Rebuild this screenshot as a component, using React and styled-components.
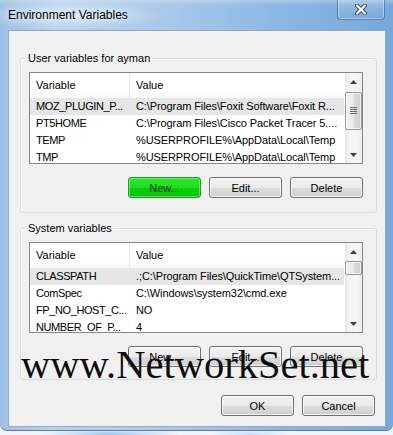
import React from "react";
import styled, { createGlobalStyle } from "styled-components";

const GlobalStyle = createGlobalStyle`
  html, body {
    margin: 0;
    padding: 0;
  }
  body {
    width: 393px;
    height: 435px;
    overflow: hidden;
    background: #eef3f9;
    font-family: "Liberation Sans", Arial, sans-serif;
  }
`;

const Screen = styled.div`
  position: relative;
  width: 393px;
  height: 435px;
  overflow: hidden;
  background:
    radial-gradient(ellipse 70px 5px at 110px 434px, rgba(110, 165, 225, 0.6), transparent),
    radial-gradient(ellipse 40px 4px at 250px 434px, rgba(140, 185, 235, 0.4), transparent),
    #f1f5fa;
`;

const Frame = styled.div`
  height: 431px;
  box-sizing: border-box;
  padding: 0 7px 0 8px;
  border-radius: 0 0 7px 7px;
  border-bottom: 1px solid #5d7ea6;
  display: flex;
  flex-direction: column;
  background:
    radial-gradient(ellipse 95px 15px at 70px 15px, rgba(225, 237, 249, 0.85), transparent),
    linear-gradient(to bottom, rgba(255, 255, 255, 0.25), transparent 6px),
    linear-gradient(to right, #9ec1e6 0%, #b7d1ed 14%, #a8c7e9 45%, #8bb6e3 72%, #76a7dc 100%);
`;

const TitleBar = styled.div`
  height: 30px;
  flex: none;
  display: flex;
  justify-content: space-between;
  align-items: center;
`;

const Title = styled.span`
  font-size: 12px;
  color: #000;
  text-shadow: 0 0 6px rgba(255, 255, 255, 0.9);
`;

const CloseButton = styled.div`
  align-self: flex-start;
  margin: -1px 1px 0 0;
  width: 48px;
  height: 21px;
  box-sizing: border-box;
  border: 1px solid rgba(50, 80, 120, 0.55);
  border-top: none;
  border-radius: 0 0 4px 4px;
  box-shadow: inset 0 0 0 1px rgba(255, 255, 255, 0.35);
  background: linear-gradient(to bottom, rgba(255, 255, 255, 0.25), rgba(120, 160, 210, 0.15));
  display: flex;
  align-items: center;
  justify-content: center;
`;

const Client = styled.div`
  height: 397px;
  flex: none;
  box-sizing: border-box;
  border: 1px solid #98aabe;
  background: #f0f0f0;
  padding: 20px 8px 10px 11px;
  display: flex;
  flex-direction: column;
`;

const Group = styled.fieldset`
  margin: ${(p) => p.$top}px 0 0;
  padding: 6px 13px ${(p) => p.$bottom}px 8px;
  border: 1px solid #d5dfe5;
  border-radius: 3px;
  box-shadow: inset 1px 1px 0 #fff;
  min-width: 0;
`;

const Legend = styled.legend`
  margin-left: -3px;
  padding: 0 2px;
  font-size: 11px;
  line-height: 15px;
  color: #000;
`;

const List = styled.div`
  height: ${(p) => p.$height}px;
  box-sizing: border-box;
  border: 1px solid #828790;
  background: #fff;
  display: grid;
  grid-template-columns: 1fr 17px;
  overflow: hidden;
`;

const Table = styled.div`
  overflow: hidden;
  font-size: 11px;
  color: #000;
`;

const HeaderRow = styled.div`
  height: 25px;
  display: grid;
  grid-template-columns: 100px 1fr;
  background: linear-gradient(to bottom, #fff, #fff 60%, #f7f8fa);
`;

const HeaderCell = styled.div`
  padding-left: 6px;
  line-height: 25px;
  border-right: ${(p) => (p.$divider ? "1px solid #e3e5e8" : "none")};
`;

const Row = styled.div`
  height: 17px;
  margin: 0 1px 0 0;
  display: grid;
  grid-template-columns: 100px 1fr;
  line-height: 17px;
  white-space: nowrap;
  background: ${(p) => (p.$selected ? "#e6e6e6" : "transparent")};
`;

const Cell = styled.div`
  padding-left: 6px;
  overflow: hidden;
  letter-spacing: ${(p) => (p.$name ? "-0.4px" : "-0.1px")};
`;

const Scrollbar = styled.div`
  display: flex;
  flex-direction: column;
  background: linear-gradient(to right, #e6e6e6, #f4f4f4 25%, #f6f6f6 75%, #ebebeb);
`;

const Arrow = styled.div`
  height: 17px;
  flex: none;
  display: flex;
  align-items: center;
  justify-content: center;
`;

const Track = styled.div`
  flex: 1;
  display: flex;
  flex-direction: column;
`;

const Thumb = styled.div`
  margin: ${(p) => p.$offset}px 0 0;
  height: ${(p) => p.$size}px;
  box-sizing: border-box;
  border: 1px solid #979797;
  border-radius: 2px;
  box-shadow: inset 0 0 0 1px rgba(255, 255, 255, 0.7);
  background: linear-gradient(to right, #f3f3f3, #e9e9e9 50%, #d9d9d9 51%, #d0d0d0);
  display: flex;
  align-items: center;
  justify-content: center;
`;

const ButtonRow = styled.div`
  margin-top: ${(p) => p.$top}px;
  padding-right: ${(p) => p.$right || 0}px;
  display: flex;
  justify-content: flex-end;
  gap: 8px;
`;

const Button = styled.button`
  width: 73px;
  height: 21px;
  padding: 0;
  box-sizing: border-box;
  border: 1px solid ${(p) => (p.$green ? "#2c9a2c" : "#707070")};
  border-radius: 3px;
  box-shadow: inset 0 0 0 1px ${(p) => (p.$green ? "rgba(150,255,150,0.5)" : "rgba(255,255,255,0.75)")};
  background: ${(p) =>
    p.$green
      ? "linear-gradient(#2ee62e, #1ede1e 50%, #0ccf0c 50%, #05c405)"
      : "linear-gradient(#f2f2f2, #ebebeb 50%, #dddddd 50%, #cfcfcf)"};
  font-family: "Liberation Sans", Arial, sans-serif;
  font-size: 11px;
  color: ${(p) => (p.$green ? "#123612" : "#000")};
`;

const Watermark = styled.div`
  position: absolute;
  left: 21px;
  top: 345px;
  font-family: "Liberation Serif", "Times New Roman", serif;
  font-size: 40.5px;
  line-height: 40px;
  color: #0d0d0d;
  white-space: nowrap;
  pointer-events: none;
`;

const UpIcon = () => (
  <svg width="7" height="4" viewBox="0 0 7 4">
    <polygon points="0,4 3.5,0 7,4" fill="#404040" />
  </svg>
);

const DownIcon = () => (
  <svg width="7" height="4" viewBox="0 0 7 4">
    <polygon points="0,0 3.5,4 7,0" fill="#404040" />
  </svg>
);

const Grip = () => (
  <svg width="7" height="8" viewBox="0 0 7 8">
    {[0.5, 2.5, 4.5, 6.5].map((y) => (
      <line key={y} x1="0" x2="7" y1={y} y2={y} stroke="#6a6a6a" strokeWidth="1" />
    ))}
  </svg>
);

const CloseIcon = () => (
  <svg width="12" height="11" viewBox="0 0 12 11">
    <path d="M2 1.5 L10 9.5 M10 1.5 L2 9.5" stroke="#3a4a60" strokeWidth="4" strokeLinecap="round" />
    <path d="M2 1.5 L10 9.5 M10 1.5 L2 9.5" stroke="#fff" strokeWidth="2.2" strokeLinecap="round" />
  </svg>
);

const VarList = ({ rows, height, thumbOffset, thumbSize, grip }) => (
  <List $height={height}>
    <Table>
      <HeaderRow>
        <HeaderCell $divider>Variable</HeaderCell>
        <HeaderCell>Value</HeaderCell>
      </HeaderRow>
      {rows.map(([name, value], i) => (
        <Row key={name} $selected={i === 0}>
          <Cell $name>{name}</Cell>
          <Cell>{value}</Cell>
        </Row>
      ))}
    </Table>
    <Scrollbar>
      <Arrow>
        <UpIcon />
      </Arrow>
      <Track>
        <Thumb $offset={thumbOffset} $size={thumbSize}>
          {grip && <Grip />}
        </Thumb>
      </Track>
      <Arrow>
        <DownIcon />
      </Arrow>
    </Scrollbar>
  </List>
);

const userRows = [
  ["MOZ_PLUGIN_P...", "C:\\Program Files\\Foxit Software\\Foxit R..."],
  ["PT5HOME", "C:\\Program Files\\Cisco Packet Tracer 5...."],
  ["TEMP", "%USERPROFILE%\\AppData\\Local\\Temp"],
  ["TMP", "%USERPROFILE%\\AppData\\Local\\Temp"],
];

const systemRows = [
  ["CLASSPATH", ".;C:\\Program Files\\QuickTime\\QTSystem..."],
  ["ComSpec", "C:\\Windows\\system32\\cmd.exe"],
  ["FP_NO_HOST_C...", "NO"],
  ["NUMBER_OF_P...", "4"],
];

export default function App() {
  return (
    <Screen>
      <GlobalStyle />
      <Frame>
        <TitleBar>
          <Title>Environment Variables</Title>
          <CloseButton>
            <CloseIcon />
          </CloseButton>
        </TitleBar>
        <Client>
          <Group $top={0} $bottom={14}>
            <Legend>User variables for ayman</Legend>
            <VarList rows={userRows} height={92} thumbOffset={2} thumbSize={38} grip />
            <ButtonRow $top={13}>
              <Button $green>New...</Button>
              <Button>Edit...</Button>
              <Button>Delete</Button>
            </ButtonRow>
          </Group>
          <Group $top={8} $bottom={12}>
            <Legend>System variables</Legend>
            <VarList rows={systemRows} height={91} thumbOffset={1} thumbSize={14} />
            <ButtonRow $top={13}>
              <Button>New...</Button>
              <Button>Edit...</Button>
              <Button>Delete</Button>
            </ButtonRow>
          </Group>
          <ButtonRow $top={15} $right={2}>
            <Button>OK</Button>
            <Button>Cancel</Button>
          </ButtonRow>
        </Client>
      </Frame>
      <Watermark>www.NetworkSet.net</Watermark>
    </Screen>
  );
}
